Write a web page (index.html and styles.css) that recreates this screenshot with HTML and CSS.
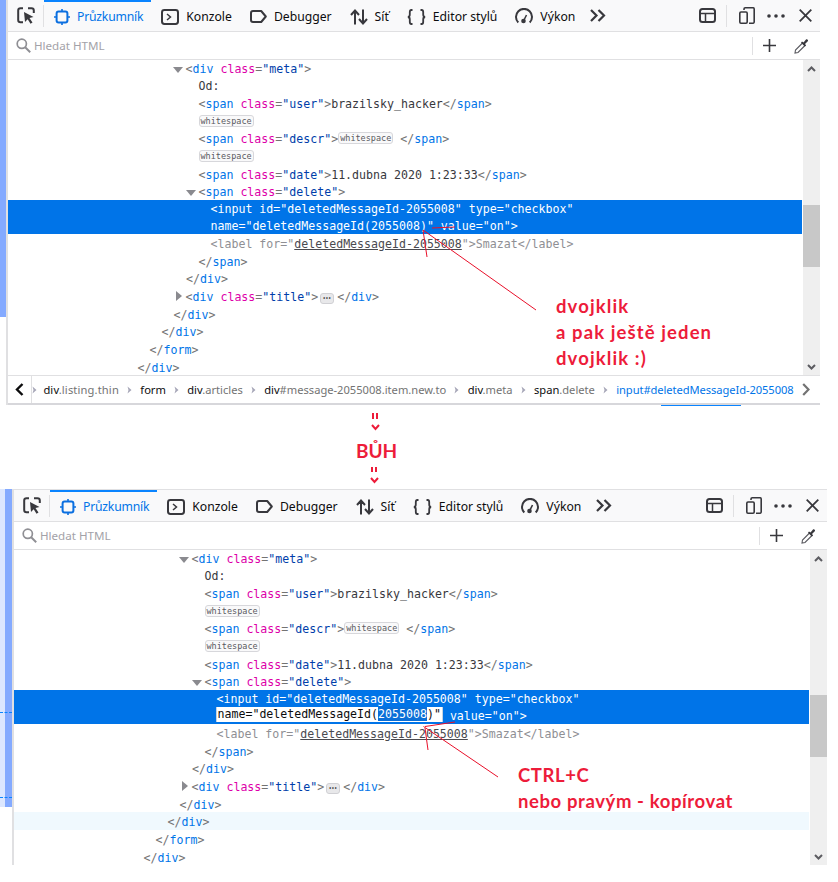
FILE: index.html
```html
<!DOCTYPE html>
<html lang="cs">
<head>
<meta charset="utf-8">
<title>Inspektor</title>
<link rel="stylesheet" href="styles.css">
</head>
<body>
<svg class="sprite" aria-hidden="true">
  <symbol id="i-pick" viewBox="0 0 18 17"><path d="M6 1.200H3.500A2.300 2.300 0 0 0 1.200 3.500v9.500a2.300 2.300 0 0 0 2.300 2.300H6M11 1.200h3.500a2.300 2.300 0 0 1 2.300 2.300V6" fill="none" stroke="#38383d" stroke-width="2"/><path d="M7 5l9.500 5-4 1 3 4.500-2 1.300-2.800-4.500-2.700 2.800z" fill="#38383d"/></symbol>
  <symbol id="i-insp" viewBox="0 0 16 16"><rect x="2.600" y="2.600" width="10.800" height="10.800" rx="2" fill="none" stroke="#0a6fe0" stroke-width="2"/><path d="M8 0v2.500M8 13.500V16M0 8h2.500M13.500 8H16" stroke="#0a6fe0" stroke-width="1.600"/></symbol>
  <symbol id="i-cons" viewBox="0 0 18 16"><rect x="1" y="1" width="16" height="14" rx="2.400" fill="none" stroke="#38383d" stroke-width="2"/><path d="M6 5l3.500 3L6 11" fill="none" stroke="#38383d" stroke-width="1.500"/></symbol>
  <symbol id="i-debug" viewBox="0 0 17 13"><path d="M3 1h8.200l4.600 5.500-4.600 5.500H3a2 2 0 0 1-2-2V3a2 2 0 0 1 2-2z" fill="none" stroke="#38383d" stroke-width="2" stroke-linejoin="round"/></symbol>
  <symbol id="i-net" viewBox="0 0 18 16"><path d="M5 15.500V2M1 6l4-4.500L9 6M13 .5V14M9 10l4 4.500 4-4.500" fill="none" stroke="#38383d" stroke-width="2"/></symbol>
  <symbol id="i-style" viewBox="0 0 19 16"><path d="M5.500 1H4.400C3.200 1 2.800 1.700 2.800 3v2.600C2.800 7 2 8 .8 8c1.200 0 2 1 2 2.400V13c0 1.300.4 2 1.600 2h1.100M13.500 1h1.100c1.200 0 1.600.7 1.600 2v2.600c0 1.400.8 2.400 2 2.400-1.200 0-2 1-2 2.400V13c0 1.300-.4 2-1.600 2h-1.100" fill="none" stroke="#38383d" stroke-width="1.800"/></symbol>
  <symbol id="i-perf" viewBox="0 0 18 17"><path d="M3.300 14.500A8 8 0 1 1 14.700 14.500" fill="none" stroke="#38383d" stroke-width="2"/><circle cx="8.500" cy="13" r="2.300" fill="#38383d"/><path d="M8.500 13l3-6" stroke="#38383d" stroke-width="1.600"/></symbol>
  <symbol id="i-more" viewBox="0 0 16 13"><path d="M1 1l5.500 5.500L1 12M8.500 1L14 6.500 8.500 12" fill="none" stroke="#38383d" stroke-width="2.200"/></symbol>
  <symbol id="i-layout" viewBox="0 0 17 15"><rect x="1" y="1" width="15" height="13" rx="2.500" fill="none" stroke="#38383d" stroke-width="2"/><path d="M1 5.500h15M6.500 5.500V14" stroke="#38383d" stroke-width="1.500"/></symbol>
  <symbol id="i-resp" viewBox="0 0 16 17"><path d="M5 3V2a1.200 1.200 0 0 1 1.200-1.200h8a1.200 1.200 0 0 1 1 1.200v13a1.200 1.200 0 0 1-1 1.200H10" fill="none" stroke="#38383d" stroke-width="1.600"/><rect x=".8" y="5" width="7.400" height="11.200" rx="1.200" fill="none" stroke="#38383d" stroke-width="1.600"/></symbol>
  <symbol id="i-dots" viewBox="0 0 18 4"><circle cx="2" cy="2" r="1.800" fill="#38383d"/><circle cx="9" cy="2" r="1.800" fill="#38383d"/><circle cx="16" cy="2" r="1.800" fill="#38383d"/></symbol>
  <symbol id="i-close" viewBox="0 0 13 13"><path d="M.7.7l11.600 11.600M12.300.7L.7 12.300" fill="none" stroke="#38383d" stroke-width="1.800"/></symbol>
  <symbol id="i-search" viewBox="0 0 15 15"><circle cx="5.800" cy="5.800" r="4.600" fill="none" stroke="#8f8f94" stroke-width="1.700"/><path d="M9.200 9.200l5 5" stroke="#8f8f94" stroke-width="2"/></symbol>
  <symbol id="i-plus" viewBox="0 0 13 13"><path d="M6.500 0v13M0 6.500h13" stroke="#38383d" stroke-width="1.600"/></symbol>
  <symbol id="i-drop" viewBox="0 0 16 16"><path d="M9 4.500L1.500 12 1 15l3-.5L11.500 7" fill="none" stroke="#5a5a60" stroke-width="1.100"/><path d="M8 3.500l1.500 1L12 1.500c1-1 2.800.7 1.800 1.800L11 6l1 1.500-1.200 1L7 4.700z" fill="#38383d"/></symbol>
  <symbol id="i-up" viewBox="0 0 9 6"><path d="M1 5l3.500-3.500L8 5" fill="none" stroke="#5c5c61" stroke-width="2"/></symbol>
  <symbol id="i-down" viewBox="0 0 9 6"><path d="M1 1l3.500 3.500L8 1" fill="none" stroke="#5c5c61" stroke-width="2"/></symbol>
  <symbol id="i-sep" viewBox="0 0 5 8"><path d="M.5.500L4.500 4 .5 7.500 1.500 4z" fill="#a7a7b8"/></symbol>
  <symbol id="i-back" viewBox="0 0 9 13"><path d="M7.500 1L2 6.500 7.500 12" fill="none" stroke="#0c0c0d" stroke-width="2.400"/></symbol>
  <symbol id="i-fwd" viewBox="0 0 8 13"><path d="M1.200 1L6.500 6.500 1.200 12" fill="none" stroke="#737373" stroke-width="2.200"/></symbol>
</svg>

<div class="canvas">
  <div class="strip strip-a"></div>
  <div class="strip-b"><div class="strip-b-fill"></div></div>
  <div class="dash dash-a"></div>
  <div class="dash dash-b"></div>

  <section class="panel panel-a">
    <nav class="toolbar">
      <span class="pick"><svg class="ic w18 h17"><use href="#i-pick"/></svg></span>
      <span class="vline"></span>
      <span class="tab active"><svg class="ic w16 h16"><use href="#i-insp"/></svg>Průzkumník</span>
      <span class="tab"><svg class="ic w18 h16"><use href="#i-cons"/></svg>Konzole</span>
      <span class="tab"><svg class="ic w17 h13"><use href="#i-debug"/></svg>Debugger</span>
      <span class="tab"><svg class="ic w18 h16"><use href="#i-net"/></svg>Síť</span>
      <span class="tab"><svg class="ic w19 h16"><use href="#i-style"/></svg>Editor stylů</span>
      <span class="tab"><svg class="ic w18 h17"><use href="#i-perf"/></svg>Výkon</span>
      <svg class="ic w16 h13 more"><use href="#i-more"/></svg>
      <span class="tools">
        <svg class="ic w17 h15"><use href="#i-layout"/></svg>
        <span class="vline tall"></span>
        <svg class="ic w16 h17"><use href="#i-resp"/></svg>
        <svg class="ic w18 h4"><use href="#i-dots"/></svg>
        <svg class="ic w13 h13"><use href="#i-close"/></svg>
      </span>
    </nav>
    <div class="search">
      <svg class="ic w15 h15"><use href="#i-search"/></svg>
      <span class="placeholder">Hledat HTML</span>
      <span class="search-tools">
        <span class="vline short"></span>
        <svg class="ic w13 h13"><use href="#i-plus"/></svg>
        <svg class="ic w16 h16"><use href="#i-drop"/></svg>
      </span>
    </div>
    <div class="markup">
      <div class="list">
        <div class="row l1"><i class="tw open"></i><b class="t">&lt;<u>div</u> <em>class</em>=<s>"meta"</s>&gt;</b></div>
        <div class="row l2">Od:</div>
        <div class="row l2"><b class="t">&lt;<u>span</u> <em>class</em>=<s>"user"</s>&gt;</b>brazilsky_hacker<b class="t">&lt;/<u>span</u>&gt;</b></div>
        <div class="row l2"><span class="ws">whitespace</span></div>
        <div class="row l2"><b class="t">&lt;<u>span</u> <em>class</em>=<s>"descr"</s>&gt;</b><span class="ws">whitespace</span> <b class="t">&lt;/<u>span</u>&gt;</b></div>
        <div class="row l2"><span class="ws">whitespace</span></div>
        <div class="row l2"><b class="t">&lt;<u>span</u> <em>class</em>=<s>"date"</s>&gt;</b>11.dubna 2020 1:23:33<b class="t">&lt;/<u>span</u>&gt;</b></div>
        <div class="row l2"><i class="tw open"></i><b class="t">&lt;<u>span</u> <em>class</em>=<s>"delete"</s>&gt;</b></div>
        <div class="selected l3">
          <div class="line">&lt;input id="deletedMessageId-2055008" type="checkbox"</div>
          <div class="line">name="deletedMessageId(2055008)" value="on"&gt;</div>
        </div>
        <div class="row l3 dim">&lt;label for="<span class="link">deletedMessageId-2055008</span>"&gt;Smazat&lt;/label&gt;</div>
        <div class="row l2"><b class="t">&lt;/<u>span</u>&gt;</b></div>
        <div class="row l1b"><b class="t">&lt;/<u>div</u>&gt;</b></div>
        <div class="row l1"><i class="tw closed"></i><b class="t">&lt;<u>div</u> <em>class</em>=<s>"title"</s>&gt;</b><span class="ev">•••</span><b class="t">&lt;/<u>div</u>&gt;</b></div>
        <div class="row l0a"><b class="t">&lt;/<u>div</u>&gt;</b></div>
        <div class="row l0b"><b class="t">&lt;/<u>div</u>&gt;</b></div>
        <div class="row l0c"><b class="t">&lt;/<u>form</u>&gt;</b></div>
        <div class="row l0d"><b class="t">&lt;/<u>div</u>&gt;</b></div>
      </div>
      <div class="scroll">
        <span class="arrow"><svg class="ic w9 h6"><use href="#i-up"/></svg></span>
        <span class="thumb"></span>
        <span class="arrow end"><svg class="ic w9 h6"><use href="#i-down"/></svg></span>
      </div>
    </div>
    <div class="crumbs">
      <svg class="ic w9 h13 back"><use href="#i-back"/></svg>
      <span class="vline crumbline"></span>
      <svg class="ic w5 h8 first"><use href="#i-sep"/></svg>
      <span class="cr lead">div<span class="g">.listing.thin</span></span>
      <svg class="ic w5 h8"><use href="#i-sep"/></svg>
      <span class="cr">form</span>
      <svg class="ic w5 h8"><use href="#i-sep"/></svg>
      <span class="cr">div<span class="g">.articles</span></span>
      <svg class="ic w5 h8"><use href="#i-sep"/></svg>
      <span class="cr">div<span class="g">#message-2055008.item.new.to</span></span>
      <svg class="ic w5 h8"><use href="#i-sep"/></svg>
      <span class="cr">div<span class="g">.meta</span></span>
      <svg class="ic w5 h8"><use href="#i-sep"/></svg>
      <span class="cr">span<span class="g">.delete</span></span>
      <svg class="ic w5 h8"><use href="#i-sep"/></svg>
      <span class="cr cur">input#deletedMessageId-2055008</span>
      <svg class="ic w8 h13 fwd"><use href="#i-fwd"/></svg>
    </div>
  </section>

  <div class="between"></div>

  <section class="panel panel-b">
    <nav class="toolbar">
      <span class="pick"><svg class="ic w18 h17"><use href="#i-pick"/></svg></span>
      <span class="vline"></span>
      <span class="tab active"><svg class="ic w16 h16"><use href="#i-insp"/></svg>Průzkumník</span>
      <span class="tab"><svg class="ic w18 h16"><use href="#i-cons"/></svg>Konzole</span>
      <span class="tab"><svg class="ic w17 h13"><use href="#i-debug"/></svg>Debugger</span>
      <span class="tab"><svg class="ic w18 h16"><use href="#i-net"/></svg>Síť</span>
      <span class="tab"><svg class="ic w19 h16"><use href="#i-style"/></svg>Editor stylů</span>
      <span class="tab"><svg class="ic w18 h17"><use href="#i-perf"/></svg>Výkon</span>
      <svg class="ic w16 h13 more"><use href="#i-more"/></svg>
      <span class="tools">
        <svg class="ic w17 h15"><use href="#i-layout"/></svg>
        <span class="vline tall"></span>
        <svg class="ic w16 h17"><use href="#i-resp"/></svg>
        <svg class="ic w18 h4"><use href="#i-dots"/></svg>
        <svg class="ic w13 h13"><use href="#i-close"/></svg>
      </span>
    </nav>
    <div class="search">
      <svg class="ic w15 h15"><use href="#i-search"/></svg>
      <span class="placeholder">Hledat HTML</span>
      <span class="search-tools">
        <span class="vline short"></span>
        <svg class="ic w13 h13"><use href="#i-plus"/></svg>
        <svg class="ic w16 h16"><use href="#i-drop"/></svg>
      </span>
    </div>
    <div class="markup">
      <div class="list">
        <div class="row l1"><i class="tw open"></i><b class="t">&lt;<u>div</u> <em>class</em>=<s>"meta"</s>&gt;</b></div>
        <div class="row l2">Od:</div>
        <div class="row l2"><b class="t">&lt;<u>span</u> <em>class</em>=<s>"user"</s>&gt;</b>brazilsky_hacker<b class="t">&lt;/<u>span</u>&gt;</b></div>
        <div class="row l2"><span class="ws">whitespace</span></div>
        <div class="row l2"><b class="t">&lt;<u>span</u> <em>class</em>=<s>"descr"</s>&gt;</b><span class="ws">whitespace</span> <b class="t">&lt;/<u>span</u>&gt;</b></div>
        <div class="row l2"><span class="ws">whitespace</span></div>
        <div class="row l2"><b class="t">&lt;<u>span</u> <em>class</em>=<s>"date"</s>&gt;</b>11.dubna 2020 1:23:33<b class="t">&lt;/<u>span</u>&gt;</b></div>
        <div class="row l2"><i class="tw open"></i><b class="t">&lt;<u>span</u> <em>class</em>=<s>"delete"</s>&gt;</b></div>
        <div class="selected l3">
          <div class="line">&lt;input id="deletedMessageId-2055008" type="checkbox"</div>
          <div class="line"><span class="editor">name="deletedMessageId(<span class="sel">2055008</span>)"</span><span class="after">value="on"&gt;</span></div>
        </div>
        <div class="row l3 dim">&lt;label for="<span class="link">deletedMessageId-2055008</span>"&gt;Smazat&lt;/label&gt;</div>
        <div class="row l2"><b class="t">&lt;/<u>span</u>&gt;</b></div>
        <div class="row l1b"><b class="t">&lt;/<u>div</u>&gt;</b></div>
        <div class="row l1"><i class="tw closed"></i><b class="t">&lt;<u>div</u> <em>class</em>=<s>"title"</s>&gt;</b><span class="ev">•••</span><b class="t">&lt;/<u>div</u>&gt;</b></div>
        <div class="row l0a"><b class="t">&lt;/<u>div</u>&gt;</b></div>
        <div class="row l0b hover"><b class="t">&lt;/<u>div</u>&gt;</b></div>
        <div class="row l0c"><b class="t">&lt;/<u>form</u>&gt;</b></div>
        <div class="row l0d"><b class="t">&lt;/<u>div</u>&gt;</b></div>
      </div>
      <div class="scroll">
        <span class="arrow"><svg class="ic w9 h6"><use href="#i-up"/></svg></span>
        <span class="thumb"></span>
        <span class="arrow end"><svg class="ic w9 h6"><use href="#i-down"/></svg></span>
      </div>
    </div>
  </section>

  <div class="artifact"></div>

  <svg class="ink" viewBox="0 0 838 882">
    <g fill="none" stroke="#e8102a" stroke-width="1">
      <path d="M423 230L536 310M423 230L427 257M432 228L455 227"/>
      <path d="M423.500 726.500L498 777M425 726.500L455 722M425 728L428 750"/>
    </g>
    <g fill="none" stroke="#ed1c3a" stroke-width="2">
      <path d="M373 413v6M377 413v6M372 425l3.500 4 3.500-4"/>
      <path d="M372 467v5M376 467v5M371 478l3.500 4 3.500-4"/>
    </g>
  </svg>
  <span class="note buh">BŮH</span>
  <div class="note note-a">dvojklik<br>a pak ještě jeden<br>dvojklik :)</div>
  <div class="note note-b">CTRL+C<br>nebo pravým - kopírovat</div>
</div>
</body>
</html>
```
FILE: styles.css
```css
* { box-sizing: border-box; }
html, body { margin: 0; padding: 0; background: #fff; }
.sprite { display: none; }
.canvas { position: relative; width: 838px; height: 882px; overflow: hidden; font-family: "Noto Sans", "Open Sans", sans-serif; }

.ic { display: block; flex: none; }
.w5 { width: 5px; } .w8 { width: 8px; } .w9 { width: 9px; } .w13 { width: 13px; } .w15 { width: 15px; }
.w16 { width: 16px; } .w17 { width: 17px; } .w18 { width: 18px; } .w19 { width: 19px; }
.h4 { height: 4px; } .h6 { height: 6px; } .h8 { height: 8px; } .h13 { height: 13px; } .h15 { height: 15px; }
.h16 { height: 16px; } .h17 { height: 17px; }

.strip { position: absolute; left: 0; top: 0; width: 6px; height: 317px; background: #84aaff; }
.strip-b { position: absolute; left: 0; top: 489px; width: 12px; height: 318px; background: #dce7ff; }
.strip-b-fill { margin-left: 5px; height: 100%; background: #84aaff; }
.dash { position: absolute; left: 0; width: 12px; border-top: 1px dashed #0a84ff; }
.dash-a { top: 712px; }
.dash-b { top: 797px; }

.panel { border-left: 2px solid #e0e0e2; }
.panel-a { margin-left: 6px; width: 814px; }
.panel-b { margin-left: 12px; width: 815px; border-top: 1px solid #e0e0e2; }
.between { height: 84px; }

.toolbar { display: flex; align-items: center; height: 32px; background: #f9f9fa; border-bottom: 1px solid #e0e0e2; font-size: 12.2px; color: #0c0c0d; white-space: nowrap; }
.pick { padding-left: 9px; width: 35px; }
.vline { display: block; flex: none; width: 1px; height: 22px; background: #e0e0e2; }
.tab { display: flex; align-items: center; gap: 7px; height: 31px; padding: 0 8px 0 10px; border-top: 2px solid transparent; }
.tab.active { border-top-color: #0a84ff; color: #0074e8; letter-spacing: -.2px; }
.more { margin-left: 7px; }
.tools { display: flex; align-items: center; margin-left: auto; padding-right: 8px; }
.vline.tall { margin: 0 12px 0 10px; }
.tools .w18 { margin-left: 12px; }
.tools .w13 { margin-left: 14px; }

.search { display: flex; align-items: center; height: 28px; padding-left: 8px; background: #fff; border-bottom: 1px solid #e0e0e2; }
.placeholder { margin-left: 3px; font-size: 11.6px; color: #a3a2a8; }
.search-tools { display: flex; align-items: center; margin-left: auto; padding-right: 10px; }
.vline.short { height: 18px; margin-right: 10px; }
.search-tools .w16 { margin-left: 18px; }

.markup { display: flex; height: 315px; overflow: hidden; font-family: "DejaVu Sans Mono", "Liberation Mono", monospace; font-size: 11.6px; color: #38383d; }
.list { flex: 1; min-width: 0; margin: -1.5px 1px 0 0; }
.row { height: 17.7px; line-height: 20px; white-space: pre; }
.l1 { padding-left: 177.500px; }
.l1b { padding-left: 178px; }
.l2 { padding-left: 190.500px; }
.l3 { padding-left: 202.500px; }
.l0a { padding-left: 165.500px; }
.l0b { padding-left: 153.500px; }
.l0c { padding-left: 141.500px; }
.l0d { padding-left: 129.500px; }
.hover { background: #f0f9fe; }

.t { font-weight: 400; color: #737373; }
.t u { text-decoration: none; color: #0074e8; }
.t em { font-style: normal; color: #dd00a9; }
.t s { text-decoration: none; color: #003eaa; }

.tw { display: inline-block; width: 0; height: 0; margin-right: 0; vertical-align: 0; border-style: solid; }
.tw.open { margin-left: -13px; margin-right: 3px; border-width: 6px 5px 0; border-color: #8a8a8f transparent transparent; }
.tw.closed { margin-left: -10px; margin-right: 4px; border-width: 5px 0 5px 6px; border-color: transparent transparent transparent #8a8a8f; }

.selected { height: 34px; background: #0074e8; color: #fff; line-height: 19.500px; }
.line { height: 17px; white-space: pre; }
.editor { display: inline-block; height: 15px; line-height: 15px; margin-left: -1px; padding: 0 1px; background: #fff; color: #0c0c0d; border: 1px solid #c5d3e2; border-width: 0 1px; vertical-align: top; }
.sel { background: #0a6fd8; color: #fff; }
.after { margin-left: 7px; }

.dim { color: #8f8f94; }
.link { color: #4a4a4f; text-decoration: underline; }

.ws { display: inline-block; height: 12px; line-height: 10px; padding: 0 1px; font-size: 8.500px; color: #5a5a60; background: #f9f9fa; border: 1px solid #d7d7db; border-radius: 3px; vertical-align: 2px; }
.ev { display: inline-block; width: 14px; height: 11px; margin: 0 3.500px 0 1.500px; line-height: 9px; text-align: center; font-size: 5.500px; letter-spacing: -.6px; color: #0c0c0d; background: #e8e8ea; border: 1px solid #d0d0d4; border-radius: 3px; vertical-align: 1px; }

.scroll { flex: none; width: 17px; display: flex; flex-direction: column; align-items: stretch; background: #efefef; }
.arrow { display: flex; align-items: center; justify-content: center; flex: none; height: 17px; }
.arrow.end { margin-top: auto; }
.thumb { flex: none; height: 62px; margin-top: 128px; background: #c8c8c8; }

.crumbs { display: flex; align-items: center; height: 30px; gap: 8.200px; background: #fff; border-top: 1px solid #e0e0e2; border-bottom: 2px solid #d7d7db; font-size: 11.150px; color: #0c0c0d; white-space: nowrap; }
.back { margin-left: 7px; }
.vline.crumbline { height: 27px; margin-left: -1px; }
.first { margin: 0 -2.200px 0 -8px; }
.lead { letter-spacing: .14px; }
.cr .g { color: #737373; }
.cur { color: #0074e8; letter-spacing: -.07px; }

.artifact { position: absolute; left: 661px; top: 405px; width: 80px; height: 1px; background: #0a84ff; }

.ink { position: absolute; left: 0; top: 0; width: 838px; height: 882px; pointer-events: none; }
.note { position: absolute; font-family: Lato, "Noto Sans", sans-serif; font-weight: 700; color: #ed1c3a; white-space: nowrap; }
.buh { left: 356px; top: 440px; font-size: 19px; line-height: 22px; }
.note-a { left: 556px; top: 293px; font-size: 18.500px; line-height: 26px; letter-spacing: 1.100px; }
.note-b { left: 518px; top: 762px; font-size: 18.500px; line-height: 26px; letter-spacing: .600px; }
```
